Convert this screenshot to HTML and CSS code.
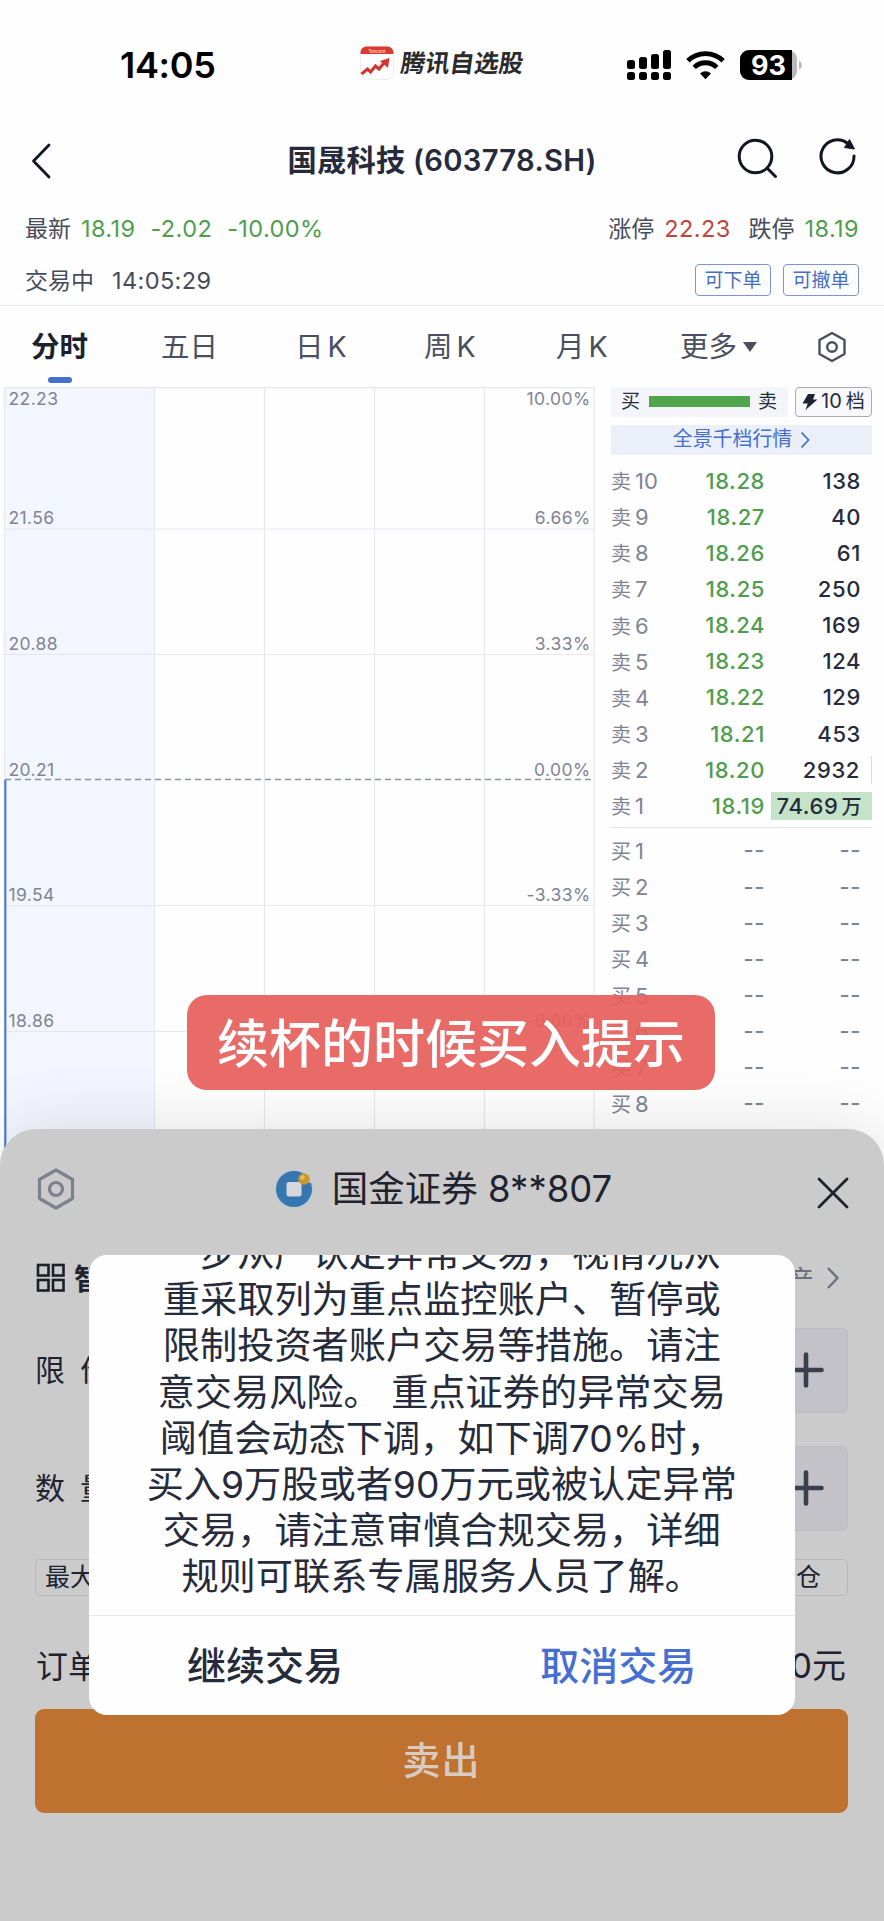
FILE: index.html
```html
<!DOCTYPE html>
<html lang="zh-CN">
<head>
    <meta charset="UTF-8">
    <meta name="viewport" content="width=device-width, initial-scale=1.0">
    <title>国晟科技 (603778.SH)</title>
    <link rel="stylesheet" href="styles.css">
</head>
<body>
    <!-- Status bar -->
    <div class="status-bar">
        <span class="clock">14:05</span>
        <div class="brand">
            <svg width="34" height="34" viewBox="0 0 34 34">
                <rect x="0.5" y="0.5" width="33" height="33" rx="6" fill="#fff" stroke="#eee"/>
                <path d="M0.5 8V6.500a6 6 0 0 1 6-6h21a6 6 0 0 1 6 6V8z" fill="#dc3a30"/>
                <text x="17" y="6.500" font-size="4.500" fill="#fff" text-anchor="middle">Tencent</text>
                <path d="M1.500 28l6-5 3 3 5-6 3.500 3 6.500-8" fill="none" stroke="#d2352d" stroke-width="3"/>
                <path d="M20 15l9.500-3-1.500 10z" fill="#d2352d"/>
            </svg>
            <span class="brand-name">腾讯自选股</span>
        </div>
        <svg class="signals" width="180" height="32" viewBox="0 0 180 32">
            <g fill="#000">
                <rect x="0" y="10" width="8" height="9" rx="2.500"/>
                <rect x="12" y="7" width="8" height="12" rx="2.500"/>
                <rect x="24" y="4" width="8" height="15" rx="2.500"/>
                <rect x="36" y="0" width="8" height="19" rx="2.500"/>
                <rect x="0" y="22" width="8" height="8" rx="2.500"/>
                <rect x="12" y="22" width="8" height="8" rx="2.500"/>
                <rect x="24" y="22" width="8" height="8" rx="2.500"/>
                <rect x="36" y="22" width="8" height="8" rx="2.500"/>
                <path d="M78.500 29.200l-5.500-5.600a7.800 7.800 0 0 1 11 0z"/>
            </g>
            <g fill="none" stroke="#000" stroke-width="4.800">
                <path d="M60.900 10.800a25 25 0 0 1 35.200 0"/>
                <path d="M67.200 17.400a16 16 0 0 1 22.600 0"/>
            </g>
            <rect x="113" y="0" width="57" height="30" rx="9" fill="#b9b9b9"/>
            <path d="M122 0h43v30h-43a9 9 0 0 1-9-9V9a9 9 0 0 1 9-9z" fill="#000"/>
            <path d="M172 10.500a5 5 0 0 1 0 9z" fill="#b9b9b9"/>
            <text class="battery" x="141.500" y="24.800" text-anchor="middle">93</text>
        </svg>
    </div>

    <!-- Title bar -->
    <header class="nav">
        <svg class="back" width="20" height="36" viewBox="0 0 20 36">
            <path d="M18 2L2.500 18 18 34" fill="none" stroke="#111622" stroke-width="2.800" stroke-linecap="round" stroke-linejoin="round"/>
        </svg>
        <h1>国晟科技 (603778.SH)</h1>
        <div class="nav-icons">
            <svg width="42" height="42" viewBox="0 0 42 42">
                <g fill="none" stroke="#111622" stroke-width="3" stroke-linecap="round">
                    <circle cx="18.500" cy="18.500" r="16.300"/>
                    <path d="M30.500 30.500l8 8"/>
                </g>
            </svg>
            <svg width="38" height="42" viewBox="0 0 38 42">
                <path d="M35 18a16.500 16.500 0 1 1-6.500-12.800" fill="none" stroke="#111622" stroke-width="3" stroke-linecap="round"/>
                <path d="M30.500 1.500l5 9.500-10-1.500z" fill="#111622" stroke="#111622" stroke-linejoin="round"/>
            </svg>
        </div>
    </header>

    <!-- Quote summary -->
    <section class="quote">
        <div class="quote-row">
            <div class="quote-left">最新<b class="down gap-s">18.19</b><b class="down gap-m">-2.02</b><b class="down gap-m">-10.00%</b></div>
            <div class="quote-right">涨停<b class="up gap-s">22.23</b><span class="gap-l">跌停</span><b class="down gap-s">18.19</b></div>
        </div>
        <div class="quote-row second">
            <div class="quote-left">交易中<b class="gap-l">14:05:29</b></div>
            <div class="tags">
                <span class="tag">可下单</span>
                <span class="tag">可撤单</span>
            </div>
        </div>
    </section>

    <!-- Period tabs -->
    <nav class="tabs">
        <span class="tab active">分时</span>
        <span class="tab">五日</span>
        <span class="tab">日<i>K</i></span>
        <span class="tab">周<i>K</i></span>
        <span class="tab">月<i>K</i></span>
        <span class="tab more">更多<svg width="16" height="12" viewBox="0 0 16 12"><path d="M1 1h14L8 11z" fill="#4a4f60"/></svg></span>
        <svg class="tab-gear" width="30" height="32" viewBox="0 0 30 32">
            <g fill="none" stroke="#4a4f60" stroke-width="2.400" stroke-linejoin="round">
                <path d="M15 2l12.500 7v14L15 30 2.500 23V9z"/>
                <circle cx="15" cy="16" r="4.800"/>
            </g>
        </svg>
    </nav>

    <main class="market">
        <!-- Intraday chart -->
        <svg class="chart" width="600" height="780" viewBox="0 0 600 780">
            <rect x="4.500" y="0" width="150" height="780" fill="#f3f6fe"/>
            <g stroke="#e6e8ee" stroke-width="1.200">
                <path d="M4.500 0.600H594.500M4.500 142H594.500M4.500 267.500H594.500M4.500 518.500H594.500M4.500 644.500H594.500"/>
                <path d="M4.500 0V780M154.500 0V780M264.500 0V780M374.500 0V780M484.500 0V780M594 0V780"/>
            </g>
            <path d="M5 392.500H594" stroke="#8e929e" stroke-width="1.600" stroke-dasharray="6 4"/>
            <path d="M5.300 393V780" stroke="#4d7dd0" stroke-width="2.200"/>
            <g class="axis">
                <text x="8.500" y="18">22.23</text>
                <text x="8.500" y="137">21.56</text>
                <text x="8.500" y="262.500">20.88</text>
                <text x="8.500" y="388.500">20.21</text>
                <text x="8.500" y="514">19.54</text>
                <text x="8.500" y="640">18.86</text>
            </g>
            <g class="axis" text-anchor="end">
                <text x="590.500" y="18">10.00%</text>
                <text x="590.500" y="137">6.66%</text>
                <text x="590.500" y="262.500">3.33%</text>
                <text x="590.500" y="388.500">0.00%</text>
                <text x="590.500" y="514">-3.33%</text>
                <text x="590.500" y="640">-6.66%</text>
            </g>
        </svg>

        <!-- Order book -->
        <aside class="book">
            <div class="book-top">
                <div class="ratio"><span>买</span><div class="ratio-bar"></div><span>卖</span></div>
                <div class="levels">
                    <svg width="16" height="18" viewBox="0 0 16 18"><path d="M6 1h7l-2 5.500h4.500L3.500 17l2.200-6.500H0.500z" fill="#1f2433"/></svg>
                    <span>10</span><em>档</em>
                </div>
            </div>
            <div class="depth">全景千档行情
                <svg width="10" height="18" viewBox="0 0 10 18"><path d="M1.500 1.500L8.500 9l-7 7.500" fill="none" stroke="#456fc9" stroke-width="1.800"/></svg>
            </div>
            <div class="rows">
                <div class="row"><span>卖<i>10</i></span><b>18.28</b><strong>138</strong></div>
                <div class="row"><span>卖<i>9</i></span><b>18.27</b><strong>40</strong></div>
                <div class="row"><span>卖<i>8</i></span><b>18.26</b><strong>61</strong></div>
                <div class="row"><span>卖<i>7</i></span><b>18.25</b><strong>250</strong></div>
                <div class="row"><span>卖<i>6</i></span><b>18.24</b><strong>169</strong></div>
                <div class="row"><span>卖<i>5</i></span><b>18.23</b><strong>124</strong></div>
                <div class="row"><span>卖<i>4</i></span><b>18.22</b><strong>129</strong></div>
                <div class="row"><span>卖<i>3</i></span><b>18.21</b><strong>453</strong></div>
                <div class="row"><span>卖<i>2</i></span><b>18.20</b><strong class="sliver">2932</strong></div>
                <div class="row"><span>卖<i>1</i></span><b>18.19</b><strong class="filled">74.69<i>万</i></strong></div>
            </div>
            <div class="rows buy">
                <div class="row"><span>买<i>1</i></span><b>--</b><strong>--</strong></div>
                <div class="row"><span>买<i>2</i></span><b>--</b><strong>--</strong></div>
                <div class="row"><span>买<i>3</i></span><b>--</b><strong>--</strong></div>
                <div class="row"><span>买<i>4</i></span><b>--</b><strong>--</strong></div>
                <div class="row"><span>买<i>5</i></span><b>--</b><strong>--</strong></div>
                <div class="row"><span>买<i>6</i></span><b>--</b><strong>--</strong></div>
                <div class="row"><span>买<i>7</i></span><b>--</b><strong>--</strong></div>
                <div class="row"><span>买<i>8</i></span><b>--</b><strong>--</strong></div>
            </div>
        </aside>
    </main>

    <!-- Trade sheet -->
    <section class="sheet">
        <div class="sheet-head">
            <svg class="sheet-gear" width="38" height="42" viewBox="0 0 38 42">
                <g fill="none" stroke="#7d808d" stroke-width="3.200" stroke-linejoin="round">
                    <path d="M19 2l16.500 9.500v19L19 40 2.500 30.500v-19z"/>
                    <circle cx="19" cy="21" r="6.500"/>
                </g>
            </svg>
            <div class="account">
                <svg width="40" height="40" viewBox="0 0 40 40">
                    <circle cx="20" cy="20" r="19.500" fill="#bccbd5"/>
                    <circle cx="20" cy="20" r="18" fill="#3577ae"/>
                    <rect x="12.500" y="13" width="15" height="14.500" rx="2.500" fill="#d5d9dd"/>
                    <path d="M31 3l7 4v7l-7-1z" fill="#cbcbcb"/>
                    <circle cx="30" cy="10" r="5.800" fill="#c9982f"/>
                    <circle cx="28.500" cy="8.500" r="2.200" fill="#e0bd68"/>
                </svg>
                <span>国金证券 8**807</span>
            </div>
            <svg class="close" width="32" height="32" viewBox="0 0 32 32">
                <path d="M2 2l28 28M30 2L2 30" stroke="#1f2330" stroke-width="2.800" stroke-linecap="round"/>
            </svg>
        </div>
        <div class="sheet-row smart">
            <div class="smart-left">
                <svg width="30" height="30" viewBox="0 0 30 30">
                    <g fill="none" stroke="#1d202b" stroke-width="2.600">
                        <rect x="2" y="2" width="10.500" height="10.500"/><rect x="17" y="2" width="10.500" height="10.500"/>
                        <rect x="2" y="17" width="10.500" height="10.500"/><rect x="17" y="17" width="10.500" height="10.500"/>
                    </g>
                </svg>
                <b>智</b>
            </div>
            <div class="smart-right">产
                <svg width="14" height="24" viewBox="0 0 14 24"><path d="M2 2l9.500 10L2 22" fill="none" stroke="#6d707d" stroke-width="2.400"/></svg>
            </div>
        </div>
        <div class="sheet-row field">
            <label><span>限</span><span>价</span></label>
            <div class="plus"><svg width="36" height="36" viewBox="0 0 36 36"><path d="M18 2.500v31M2.500 18h31" stroke="#3a3f50" stroke-width="4.600" stroke-linecap="round"/></svg></div>
        </div>
        <div class="sheet-row field">
            <label><span>数</span><span>量</span></label>
            <div class="plus"><svg width="36" height="36" viewBox="0 0 36 36"><path d="M18 2.500v31M2.500 18h31" stroke="#3a3f50" stroke-width="4.600" stroke-linecap="round"/></svg></div>
        </div>
        <div class="sheet-row chips">
            <span class="chip">最大</span>
            <span class="chip last">仓</span>
        </div>
        <div class="sheet-row total">
            <span>订单</span>
            <span class="sum">0元</span>
        </div>
        <button class="sell">卖出</button>
    </section>

    <!-- Risk dialog -->
    <div class="dialog">
        <div class="dialog-body">
            <p>一步从严认定异常交易，视情况从</p>
            <p>重采取列为重点监控账户、暂停或</p>
            <p>限制投资者账户交易等措施。请注</p>
            <p>意交易风险。 重点证券的异常交易</p>
            <p>阈值会动态下调，如下调70%时，</p>
            <p>买入9万股或者90万元或被认定异常</p>
            <p>交易，请注意审慎合规交易，详细</p>
            <p>规则可联系专属服务人员了解。</p>
        </div>
        <div class="dialog-actions">
            <button class="go">继续交易</button>
            <button class="cancel">取消交易</button>
        </div>
    </div>

    <div class="toast">续杯的时候买入提示</div>
</body>
</html>
```
FILE: styles.css
```css
* {
    box-sizing: border-box;
}

body {
    margin: 0;
    position: relative;
    width: 884px;
    height: 1921px;
    overflow: hidden;
    background: #fefefe;
    color: #262b3b;
    font-family: Inter, "Noto Sans CJK SC", sans-serif;
    text-spacing-trim: space-all;
}

svg {
    display: block;
    flex: none;
}

i, em {
    font-style: normal;
}

button {
    border: none;
    padding: 0;
    background: none;
    font-family: inherit;
}

/* Status bar */
.status-bar {
    display: flex;
    align-items: center;
    height: 130px;
    padding-left: 120px;
}

.clock {
    width: 240px;
    color: #000;
    font-size: 36px;
    font-weight: 600;
    letter-spacing: -0.3px;
}

.brand {
    display: flex;
    align-items: center;
    gap: 7px;
    width: 267px;
    margin-top: -5px;
}

.brand-name {
    color: #2b2b2b;
    font-size: 24.5px;
    font-weight: 700;
    line-height: 34px;
    transform: skewX(-8deg);
}

.signals {
    margin-top: 2px;
}

.battery {
    fill: #fff;
    font-size: 27px;
    font-weight: 700;
}

/* Title bar */
.nav {
    display: flex;
    align-items: center;
    justify-content: space-between;
    height: 62px;
    padding: 0 27px 0 31px;
}

.nav h1 {
    width: 320px;
    margin: 0 0 0 107px;
    font-size: 29.2px;
    font-weight: 600;
    letter-spacing: 0.3px;
    line-height: 40px;
    white-space: nowrap;
}

.nav-icons {
    display: flex;
    gap: 40px;
    margin-top: -4px;
}

/* Quote summary */
.quote {
    height: 113.5px;
    padding: 10px 25px 0;
    border-bottom: 1.5px solid #e9eaee;
    color: #464b5c;
    font-size: 23px;
}

.quote-row {
    display: flex;
    align-items: center;
    justify-content: space-between;
    height: 50px;
}

.quote-row.second {
    height: 54px;
}

.quote b {
    font-size: 23.5px;
    font-weight: 400;
    letter-spacing: 0.4px;
}

.quote .up {
    color: #bd463f;
}

.quote .down {
    color: #4f9d4d;
}

.gap-s {
    margin-left: 10px;
}

.gap-m {
    margin-left: 15px;
}

.gap-l {
    margin-left: 18px;
}

.tags {
    display: flex;
    gap: 12px;
    margin-top: 1px;
}

.tag {
    width: 76px;
    height: 32px;
    border: 1.5px solid #7897d4;
    border-radius: 4px;
    color: #456fc0;
    font-size: 19px;
    line-height: 31px;
    text-align: center;
}

/* Period tabs */
.tabs {
    display: grid;
    grid-template-columns: 130px 134px 129px 132px 124px 137px 30px;
    align-items: center;
    height: 81px;
    padding-left: 31px;
    color: #4a4f60;
    font-size: 28.5px;
    line-height: 82px;
}

.tab i {
    margin-left: 4px;
}

.tab.active {
    position: relative;
    color: #1c2130;
    font-weight: 700;
}

.tab.active::after {
    content: "";
    position: absolute;
    left: 17px;
    bottom: 5px;
    width: 24px;
    height: 6px;
    border-radius: 3px;
    background: #4570cd;
}

.more {
    display: flex;
    align-items: center;
    gap: 5px;
}

/* Chart and order book */
.market {
    display: flex;
    height: 780px;
}

.chart {
    margin-right: 11px;
}

.axis {
    fill: #7f8494;
    font-size: 17.5px;
    letter-spacing: 0.4px;
}

.book {
    width: 261px;
}

.book-top {
    display: flex;
    justify-content: space-between;
    height: 30px;
}

.ratio {
    display: flex;
    align-items: center;
    justify-content: space-between;
    width: 177px;
    padding: 0 11px 0 10px;
    background: #f4f5fa;
    font-size: 19px;
    line-height: 30px;
}

.ratio-bar {
    width: 101px;
    height: 11px;
    background: #50a44c;
}

.levels {
    display: flex;
    align-items: center;
    width: 77px;
    padding-left: 6px;
    border: 1.5px solid #a8abb5;
    border-radius: 4px;
    background: #f8f8fb;
    font-size: 20px;
    line-height: 27px;
}

.levels span {
    margin-left: 3px;
}

.levels em {
    margin-left: 4px;
    font-size: 19px;
}

.depth {
    display: flex;
    align-items: center;
    justify-content: center;
    gap: 8px;
    height: 30px;
    margin-top: 8px;
    background: #eaeffa;
    color: #456fc9;
    font-size: 19.9px;
    line-height: 31px;
}

.rows {
    padding-top: 8px;
}

.rows.buy {
    margin-top: 3.5px;
    padding-top: 4px;
    border-top: 1.5px solid #dfe2e9;
}

.row {
    display: grid;
    grid-template-columns: 60px 94px 107px;
    align-items: center;
    height: 36.15px;
}

.row span {
    color: #7f8494;
    font-size: 20px;
}

.row span i {
    margin-left: 4px;
    font-size: 22px;
}

.row b {
    color: #4f9d4d;
    font-size: 22px;
    font-weight: 500;
    letter-spacing: 0.6px;
    text-align: right;
}

.row strong {
    justify-self: end;
    height: 28px;
    padding-right: 11px;
    font-size: 22px;
    font-weight: 500;
    letter-spacing: 0.6px;
    line-height: 28px;
}

.row .sliver {
    border-right: 1px solid #cfe3d4;
}

.row .filled {
    padding-left: 6px;
    padding-right: 10px;
    background: #c5e3c8;
    white-space: nowrap;
}

.filled i {
    margin-left: 3px;
    font-size: 20px;
}

.buy .row b,
.buy .row strong {
    color: #7f8494;
}

/* Trade sheet */
.sheet {
    position: relative;
    height: 792px;
    margin-top: -38px;
    padding: 0 36px;
    border-radius: 36px 36px 0 0;
    background: #cbcbcb;
    box-shadow: 0 0 70px rgba(0, 0, 0, 0.12);
    color: #1f2330;
}

.sheet-head {
    display: flex;
    align-items: center;
    justify-content: space-between;
    height: 120px;
}

.sheet-gear {
    margin-left: 1px;
}

.account {
    display: flex;
    align-items: center;
    gap: 18px;
    margin-left: -6px;
    font-size: 36.5px;
    line-height: 50px;
}

.close {
    margin-top: 8px;
    margin-right: -1px;
}

.sheet-row {
    display: flex;
    align-items: center;
    justify-content: space-between;
}

.smart {
    height: 59px;
}

.smart-left {
    display: flex;
    align-items: center;
    gap: 8px;
    font-size: 29px;
}

.smart-left b {
    margin-top: -2px;
}

.smart-right {
    display: flex;
    align-items: center;
    gap: 12px;
    padding-right: 8px;
    color: #6d707d;
    font-size: 27px;
}

.field {
    height: 85px;
    margin-top: 20px;
    font-size: 30px;
}

.field + .field {
    margin-top: 33px;
}

.field label {
    display: flex;
    gap: 15px;
    margin: -4px 0 0 -1px;
}

.plus {
    display: flex;
    align-items: center;
    justify-content: center;
    width: 84px;
    height: 85px;
    border: 1px solid #bcbcc2;
    border-radius: 6px;
    background: #c3c2c8;
}

.chips {
    height: 38px;
    margin-top: 28px;
}

.chip {
    width: 120px;
    height: 37px;
    margin-left: -1px;
    padding: 0 9px;
    border: 1px solid #b7b7bb;
    border-radius: 5px;
    font-size: 25px;
    line-height: 35px;
}

.chip.last {
    padding-right: 26px;
    text-align: right;
}

.total {
    height: 112px;
    padding-top: 22px;
    font-size: 32px;
}

.sum {
    padding-right: 2px;
    font-size: 34px;
}

.sell {
    display: block;
    width: 813px;
    height: 104px;
    margin-left: -1px;
    padding-bottom: 6px;
    border-radius: 9px;
    background: #bf722f;
    color: #d8cbc1;
    font-size: 38px;
    font-weight: 500;
    letter-spacing: 1px;
}

/* Risk dialog */
.dialog {
    position: absolute;
    left: 88.5px;
    top: 1255px;
    display: flex;
    flex-direction: column;
    width: 706.5px;
    height: 460px;
    border-radius: 18px;
    background: #fefefe;
    overflow: hidden;
}

.dialog-body {
    display: flex;
    flex-direction: column;
    justify-content: flex-end;
    height: 361px;
    padding-bottom: 14.5px;
    border-bottom: 1.5px solid #e8e8ea;
}

.dialog-body p {
    flex: none;
    height: 46.2px;
    margin: 0;
    font-size: 37.2px;
    line-height: 46.2px;
    text-align: center;
    white-space: nowrap;
}

.dialog-actions {
    display: flex;
    flex: 1;
}

.dialog-actions button {
    flex: 1;
    padding-bottom: 6px;
    color: #262b3b;
    font-size: 39px;
    font-weight: 500;
}

.dialog-actions .cancel {
    color: #456fd0;
}

/* Caption over the page */
.toast {
    position: absolute;
    left: 187px;
    top: 995px;
    width: 528px;
    height: 95px;
    border-radius: 20px;
    background: rgba(230, 96, 91, 0.93);
    color: #fff;
    font-size: 52px;
    font-weight: 500;
    line-height: 100px;
    text-align: center;
}
```
